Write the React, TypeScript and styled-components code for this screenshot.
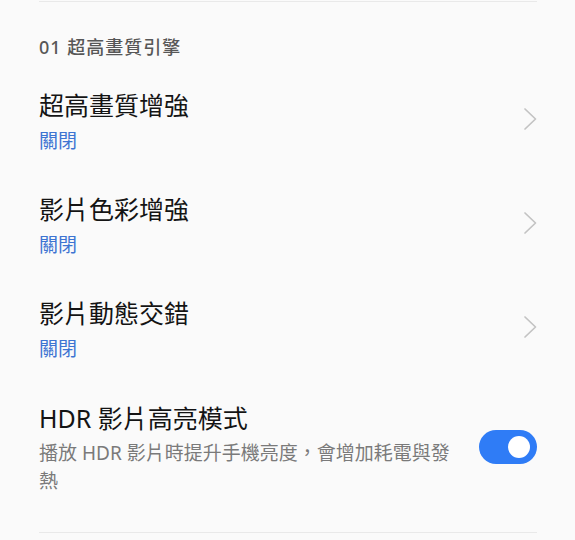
import React from "react";
import styled, { createGlobalStyle } from "styled-components";

const GlobalStyle = createGlobalStyle`
  body {
    margin: 0;
    background: #fafafa;
    font-family: "Noto Sans", "Noto Sans CJK TC", sans-serif;
  }
`;

const items = [
  { title: "超高畫質增強", value: "關閉" },
  { title: "影片色彩增強", value: "關閉" },
  { title: "影片動態交錯", value: "關閉" },
];

const Chevron: React.FC = () => (
  <svg width="14" height="24" viewBox="0 0 14 24" fill="none">
    <path
      d="M2 2 L12.5 12 L2 22"
      stroke="#c3c3c3"
      strokeWidth="1.7"
      strokeLinecap="round"
      strokeLinejoin="round"
    />
  </svg>
);

const App: React.FC = () => {
  return (
    <Page>
      <GlobalStyle />
      <Divider $top={1} />
      <SectionHeader>01 超高畫質引擎</SectionHeader>
      <List>
        {items.map((item) => (
          <Row key={item.title}>
            <TextCol>
              <Title>{item.title}</Title>
              <Value>{item.value}</Value>
            </TextCol>
            <ChevronWrap>
              <Chevron />
            </ChevronWrap>
          </Row>
        ))}
        <SwitchRow>
          <TextCol $narrow>
            <Title>HDR 影片高亮模式</Title>
            <Description>播放 HDR 影片時提升手機亮度，會增加耗電與發熱</Description>
          </TextCol>
          <Switch $on>
            <Knob />
          </Switch>
        </SwitchRow>
      </List>
      <Divider $top={0} />
    </Page>
  );
};

// Styled Components
const Page = styled.div`
  width: 498px;
  padding: 0 38px 0 39px;
  font-family: "Noto Sans", "Noto Sans CJK TC", sans-serif;
`;

const Divider = styled.div<{ $top: number }>`
  height: 1px;
  margin-top: ${(p) => p.$top}px;
  background: #e9e9e9;
`;

const SectionHeader = styled.div`
  margin-top: 33px;
  font-size: 18px;
  line-height: 24px;
  letter-spacing: 1px;
  font-weight: 500;
  color: #575757;
`;

const List = styled.div`
  display: flex;
  flex-direction: column;
  margin-top: 10px;
`;

const Row = styled.div`
  display: flex;
  align-items: center;
  justify-content: space-between;
  padding: 19px 0 18px;
`;

const TextCol = styled.div<{ $narrow?: boolean }>`
  display: flex;
  flex-direction: column;
  gap: 5px;
  max-width: ${(p) => (p.$narrow ? "420px" : "none")};
`;

const Title = styled.div`
  font-size: 25px;
  line-height: 34px;
  color: #141414;
`;

const Value = styled.div`
  font-size: 19px;
  line-height: 28px;
  color: #3d74d2;
`;

const Description = styled.div`
  font-size: 19px;
  line-height: 28px;
  color: #7a7a7a;
  margin-top: -1px;
`;

const ChevronWrap = styled.div`
  display: flex;
  margin-top: -5px;
`;

const SwitchRow = styled.div`
  display: flex;
  align-items: center;
  justify-content: space-between;
  padding: 20px 0 37px;
`;

const Switch = styled.div<{ $on?: boolean }>`
  position: relative;
  width: 58px;
  height: 34px;
  border-radius: 17px;
  background: ${(p) => (p.$on ? "#2f7cf6" : "#d0d0d0")};
  flex-shrink: 0;
  margin-top: -3px;
`;

const Knob = styled.div`
  position: absolute;
  top: 6px;
  right: 7px;
  width: 22px;
  height: 22px;
  border-radius: 50%;
  background: #fff;
`;

export default App;
